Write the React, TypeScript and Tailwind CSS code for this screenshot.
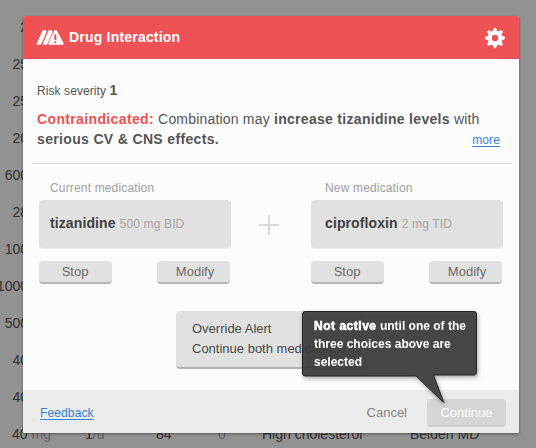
import type { ReactNode } from "react";

const doses = ["2", "25", "25", "20", "600", "28", "100", "1000", "500", "40", "40"];

function Backdrop() {
  return (
    <div className="flex h-full flex-col pt-[9px] text-[14px] text-[#303030]">
      {doses.map((dose, i) => (
        <div key={i} className="flex h-[37px] w-[28px] shrink-0 items-center justify-end">
          {dose}
        </div>
      ))}
      <div className="grid h-[37px] shrink-0 grid-cols-[73px_71px_62px_44px_148px_1fr] items-center whitespace-nowrap pl-[12px]">
        <span>40 <span className="text-[#666]">mg</span></span>
        <span>1<span className="text-[#666]">/d</span></span>
        <span>84</span>
        <span className="text-[#666]">0</span>
        <span>High cholesterol</span>
        <span>Belden MD</span>
      </div>
    </div>
  );
}

function AlertIcon() {
  return (
    <svg width="28" height="17" viewBox="0 0 28 17" fill="#fff" stroke="#fff" strokeLinejoin="round" strokeLinecap="round">
      <path d="M1.300 15 7.300 1.700H9.200L9.900 2.800 4.400 15Z" strokeWidth="1.500" />
      <path d="M7.400 15 13.400 1.700H15.300L16 2.800 10.500 15Z" strokeWidth="1.500" />
      <path d="M13.400 14.700 19.200 2.200H20L26.600 14.700Z" strokeWidth="2.200" />
      <path d="M19.300 6.200V10.200M19.300 13.100V13.200" stroke="#ef5254" strokeWidth="2.100" />
    </svg>
  );
}

function GearIcon() {
  return (
    <svg width="22" height="22" viewBox="-11 -11 22 22">
      <circle r="5.150" fill="none" stroke="#fff" strokeWidth="3.900" />
      {[0, 45, 90, 135, 180, 225, 270, 315].map((a) => (
        <path key={a} d="M-2.100-6.300-.7-9.700H.7L2.100-6.300Z" fill="#fff" stroke="#fff" strokeWidth="1" strokeLinejoin="round" transform={`rotate(${a})`} />
      ))}
    </svg>
  );
}

function Action({ children }: { children: ReactNode }) {
  return (
    <button className="h-[23px] w-[73px] rounded-[4px] border-b-2 border-[#b4b4b4] bg-[#e1e1e1] text-[13px] leading-[21px] text-[#6b6b6b]">
      {children}
    </button>
  );
}

function Medication({ label, name, dose, inset }: { label: string; name: string; dose: string; inset: string }) {
  return (
    <section className="w-[192px]">
      <h2 className={`h-[20px] text-[12px] leading-[16px] tracking-[0.16px] text-[#a0a0a0] ${inset}`}>{label}</h2>
      <div className={`flex h-[49px] items-center whitespace-nowrap rounded-[4px] border-b border-[#ededed] bg-[#e1e1e1] pb-px text-[12px] tracking-[0.15px] text-[#a5a5a5] ${inset}`}>
        <b className="mr-1 text-[14px] tracking-[0.1px] text-[#3f3f3f]">{name}</b>
        {dose}
      </div>
      <div className="mt-3 flex w-[191px] justify-between">
        <Action><span className="pr-px">Stop</span></Action>
        <Action><span className="pl-[3px]">Modify</span></Action>
      </div>
    </section>
  );
}

function Tooltip() {
  return (
    <div className="absolute left-[279px] top-[295px] h-[96px] w-[177px] drop-shadow-[1px_2px_2px_rgba(0,0,0,0.35)]">
      <svg className="absolute inset-0" width="177" height="96" viewBox="0 0 177 96">
        <path d="M3 .5H172Q174.500 .5 174.500 3V61.500Q174.500 64 172 64H131.500L142 92 114 65H3Q.5 65 .5 62V3Q.5 .5 3 .5Z" fill="#3e3e3e" fillOpacity=".93" stroke="#222" />
      </svg>
      <p className="relative whitespace-nowrap pl-[12px] pt-[6px] text-[12px] font-bold leading-[18px] text-white">
        <span className="tracking-[0.52px] [-webkit-text-stroke:0.6px_white]">Not active</span> until one of the
        <br />three choices above are
        <br />selected
      </p>
    </div>
  );
}

export default function App() {
  return (
    <main className="relative h-[448px] w-[536px] overflow-hidden bg-[#929292] font-['Liberation_Sans',Arial,sans-serif]">
      <Backdrop />
      <div className="absolute left-[23px] top-[16px] flex h-[417px] w-[496px] flex-col rounded-[2px] bg-[#fcfcfc] shadow-[0_1px_3px_rgba(0,0,0,0.4)]">
        <header className="flex h-[43px] items-center justify-between rounded-t-[2px] bg-[#ef5254] px-[13px] text-white">
          <h1 className="flex items-center gap-[5px] text-[14px] font-bold tracking-[0.2px]"><AlertIcon />Drug Interaction</h1>
          <GearIcon />
        </header>
        <div className="h-[104px] px-[14px] pt-[21px] text-[#555]">
          <p className="h-[29px] text-[12px] leading-[20px] tracking-[0.08px]">Risk severity <b className="text-[14px]">1</b></p>
          <p className="whitespace-nowrap text-[14px] leading-[20px] tracking-[0.19px]"><b className="tracking-[0.36px] text-[#ef5254]">Contraindicated:</b> Combination may <b className="tracking-[0.3px]">increase tizanidine levels</b> with</p>
          <div className="flex justify-between pr-[5px] text-[14px] leading-[20px]">
            <b className="tracking-[0.34px]">serious CV &amp; CNS effects.</b>
            <a className="text-[12px] leading-[22px] tracking-[0.1px] text-[#3982d8] underline underline-offset-2">more</a>
          </div>
        </div>
        <hr className="ml-[9px] mr-[7px] border-[#dedede]" />
        <div className="flex pl-[16px] pt-[16px]">
          <Medication label="Current medication" name="tizanidine" dose="500 mg BID" inset="pl-[11px]" />
          <div className="flex w-[80px] justify-center pr-[4px] pt-[35px]">
            <svg width="20" height="20"><path d="M0 10H20M10 0V20" stroke="#d9d9d9" strokeWidth="2" /></svg>
          </div>
          <Medication label="New medication" name="ciprofloxin" dose="2 mg TID" inset="pl-[14px]" />
        </div>
        <button className="ml-[153px] mt-[27px] h-[58px] w-[190px] whitespace-nowrap rounded-[4px] border-b-2 border-[#b4b4b4] bg-[#e1e1e1] pl-[16px] text-left text-[13px] leading-[20px] text-[#484848]">
          Override Alert<br />Continue both medications
        </button>
        <footer className="mt-auto flex h-[43px] items-center rounded-b-[2px] bg-[#ebebeb] pl-[17px] pr-[13px] pt-[2px]">
          <a className="mr-auto text-[12px] tracking-[0.12px] text-[#2f83da] underline underline-offset-2">Feedback</a>
          <button className="mr-[20px] text-[13px] text-[#858585]">Cancel</button>
          <button className="h-[28px] w-[79px] rounded-[4px] border-b border-[#cdcdcd] bg-[#d5d5d5] pt-px text-[13px] text-white">Continue</button>
        </footer>
        <Tooltip />
      </div>
    </main>
  );
}
